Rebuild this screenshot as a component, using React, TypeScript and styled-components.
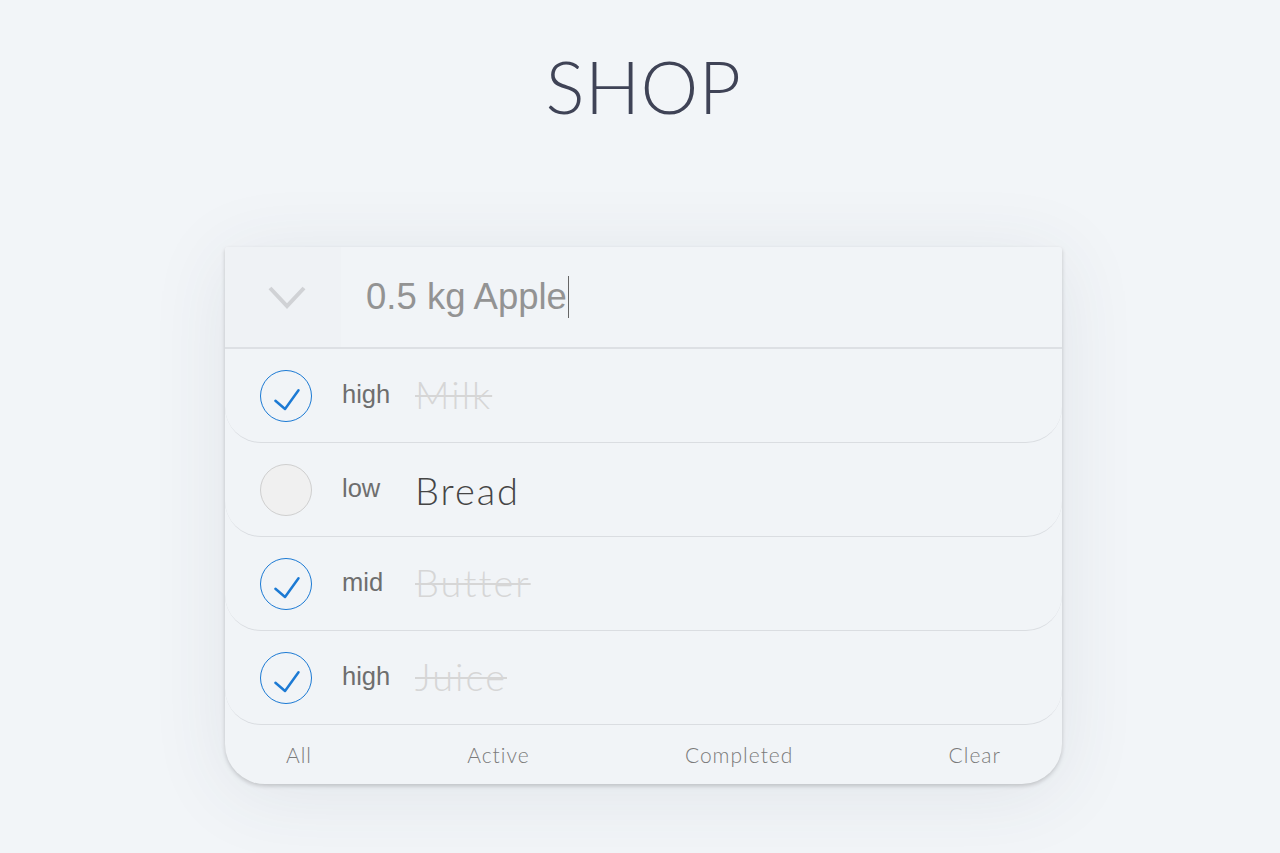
import React from "react";
import styled, { createGlobalStyle } from "styled-components";

const Global = createGlobalStyle`
  html, body { margin: 0; padding: 0; background: #f2f5f8; }
  body { font-family: "Lato", "Liberation Sans", sans-serif; }
`;

const Page = styled.div`
  min-height: 853px;
  display: flex;
  flex-direction: column;
  align-items: center;
  padding-left: 7px;
`;

const Title = styled.h1`
  margin: 44px 0 0;
  font-family: "Lato", sans-serif;
  font-weight: 300;
  font-size: 73px;
  line-height: 84px;
  color: #3f4356;
  letter-spacing: 0.5px;
`;

const Card = styled.section`
  margin-top: 119px;
  width: 837px;
  background: #f1f4f7;
  border-radius: 3px 3px 40px 40px;
  box-shadow: 0 2px 4px rgba(0, 0, 0, 0.18), 0 10px 80px rgba(60, 70, 90, 0.09);
  overflow: hidden;
`;

const Header = styled.div`
  display: flex;
  height: 100px;
  border-bottom: 2px solid #dde0e4;
`;

const Toggle = styled.div`
  width: 116px;
  box-sizing: border-box;
  padding-left: 8px;
  display: flex;
  align-items: center;
  justify-content: center;
  background: #eff2f5;
`;

const InputText = styled.div`
  flex: 1;
  display: flex;
  align-items: center;
  padding-left: 25px;
  font-family: "Liberation Sans", Arial, sans-serif;
  font-size: 36.5px;
  color: #939393;
`;

const Caret = styled.span`
  display: inline-block;
  width: 1px;
  height: 42px;
  background: #666;
  margin-left: 1px;
`;

const List = styled.ul`
  list-style: none;
  margin: 0;
  padding: 0;
`;

const Row = styled.li`
  display: flex;
  align-items: center;
  height: 93px;
  padding-left: 35px;
  border-bottom: 1.5px solid #dadde1;
  border-radius: 0 0 36px 36px;
`;

const Circle = styled.div<{ $done: boolean }>`
  width: 52px;
  height: 52px;
  box-sizing: border-box;
  border-radius: 50%;
  border: 1.5px solid ${(p) => (p.$done ? "#1c7ad4" : "#cfcfcf")};
  background: ${(p) => (p.$done ? "transparent" : "#f0f0f0")};
  display: flex;
  align-items: center;
  justify-content: center;
  margin-right: 30px;
  flex-shrink: 0;
`;

const Priority = styled.span`
  width: 73px;
  font-family: "Liberation Sans", Arial, sans-serif;
  font-size: 25.5px;
  color: #6e6e6e;
  margin-top: -2px;
`;

const Name = styled.span<{ $done: boolean }>`
  font-family: "Lato", sans-serif;
  font-weight: 300;
  font-size: 38px;
  letter-spacing: 2px;
  color: ${(p) => (p.$done ? "#d6d6d6" : "#454545")};
  text-decoration: ${(p) => (p.$done ? "line-through" : "none")};
  text-decoration-thickness: 2px;
  margin-top: ${(p) => (p.$done ? "-4px" : "0")};
`;

const Footer = styled.footer`
  display: flex;
  justify-content: space-between;
  align-items: center;
  height: 59px;
  padding: 0 61px 0 61px;
  font-family: "Lato", sans-serif;
  font-weight: 300;
  font-size: 21px;
  color: #7a7a7a;
`;

const FooterItem = styled.span`
  letter-spacing: 1px;
`;

const Chevron = () => (
  <svg width="40" height="26" viewBox="0 0 40 26">
    <polyline points="3,4 20,22 37,4" fill="none" stroke="#d0d2d5" strokeWidth="4" />
  </svg>
);

const Check = () => (
  <svg width="52" height="52" viewBox="0 0 52 52">
    <polyline points="15,31 25,39.5 39,20" fill="none" stroke="#1c7ad4" strokeWidth="2.6" strokeLinecap="round" strokeLinejoin="round" />
  </svg>
);

const items = [
  { p: "high", n: "Milk", d: true },
  { p: "low", n: "Bread", d: false },
  { p: "mid", n: "Butter", d: true },
  { p: "high", n: "Juice", d: true },
];

export default function App() {
  return (
    <>
      <Global />
      <Page>
        <Title>SHOP</Title>
        <Card>
          <Header>
            <Toggle>
              <Chevron />
            </Toggle>
            <InputText>
              0.5 kg Apple
              <Caret />
            </InputText>
          </Header>
          <List>
            {items.map((it, i) => (
              <Row key={i}>
                <Circle $done={it.d}>{it.d && <Check />}</Circle>
                <Priority>{it.p}</Priority>
                <Name $done={it.d}>{it.n}</Name>
              </Row>
            ))}
          </List>
          <Footer>
            <FooterItem>All</FooterItem>
            <FooterItem>Active</FooterItem>
            <FooterItem>Completed</FooterItem>
            <FooterItem>Clear</FooterItem>
          </Footer>
        </Card>
      </Page>
    </>
  );
}
